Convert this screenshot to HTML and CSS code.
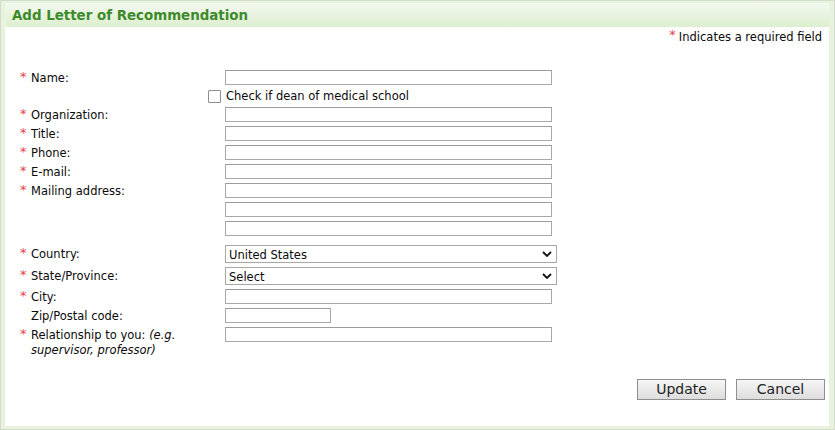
FILE: index.html
```html
<!DOCTYPE html>
<html>
<head>
<meta charset="utf-8">
<link rel="stylesheet" href="styles.css">
</head>
<body>
<div class="frame">
  <div class="header">Add Letter of Recommendation</div>
  <div class="content">
    <div class="required-note"><span class="req">*</span>Indicates a required field</div>
    <div class="form">
      <div class="row">
        <div class="label"><span class="req">*</span><span>Name:</span></div>
        <div class="field"><input type="text" class="text"></div>
      </div>
      <div class="row">
        <div class="label"></div>
        <div class="field check"><input type="checkbox" class="box"><span>Check if dean of medical school</span></div>
      </div>
      <div class="row">
        <div class="label"><span class="req">*</span><span>Organization:</span></div>
        <div class="field"><input type="text" class="text"></div>
      </div>
      <div class="row">
        <div class="label"><span class="req">*</span><span>Title:</span></div>
        <div class="field"><input type="text" class="text"></div>
      </div>
      <div class="row">
        <div class="label"><span class="req">*</span><span>Phone:</span></div>
        <div class="field"><input type="text" class="text"></div>
      </div>
      <div class="row">
        <div class="label"><span class="req">*</span><span>E-mail:</span></div>
        <div class="field"><input type="text" class="text"></div>
      </div>
      <div class="row">
        <div class="label"><span class="req">*</span><span>Mailing address:</span></div>
        <div class="field stack">
          <input type="text" class="text">
          <input type="text" class="text">
          <input type="text" class="text">
        </div>
      </div>
      <div class="row spaced">
        <div class="label sel"><span class="req">*</span><span>Country:</span></div>
        <div class="field">
          <div class="select-wrap">
            <select class="select"><option>United States</option></select>
            <svg class="chev" width="10" height="6" viewBox="0 0 10 6"><path d="M1 1 L5 5 L9 1" fill="none" stroke="#111" stroke-width="1.8"/></svg>
          </div>
        </div>
      </div>
      <div class="row">
        <div class="label sel"><span class="req">*</span><span>State/Province:</span></div>
        <div class="field">
          <div class="select-wrap">
            <select class="select"><option>Select</option></select>
            <svg class="chev" width="10" height="6" viewBox="0 0 10 6"><path d="M1 1 L5 5 L9 1" fill="none" stroke="#111" stroke-width="1.8"/></svg>
          </div>
        </div>
      </div>
      <div class="row">
        <div class="label"><span class="req">*</span><span>City:</span></div>
        <div class="field"><input type="text" class="text"></div>
      </div>
      <div class="row">
        <div class="label"><span class="req blank"></span><span>Zip/Postal code:</span></div>
        <div class="field"><input type="text" class="text short"></div>
      </div>
      <div class="row">
        <div class="label"><span class="req">*</span><div class="multi"><div>Relationship to you: <em>(e.g.</em></div><div><em>supervisor, professor)</em></div></div></div>
        <div class="field"><input type="text" class="text"></div>
      </div>
    </div>
    <div class="actions">
      <button class="btn">Update</button>
      <button class="btn">Cancel</button>
    </div>
  </div>
</div>
</body>
</html>
```

FILE: styles.css
```css
html, body {
  margin: 0;
  padding: 0;
  background: #ffffff;
}
body {
  font-family: "DejaVu Sans", Verdana, sans-serif;
  font-size: 11.5px;
  color: #0a0a0a;
}
.frame {
  box-sizing: border-box;
  width: 835px;
  height: 430px;
  border: 1px solid #d3dccd;
  background: #e8f3de;
  padding: 2px 5px 3px 4px;
  display: flex;
  flex-direction: column;
}
.header {
  height: 24px;
  box-sizing: border-box;
  line-height: 24px;
  padding: 1px 0 0 6px;
  font-weight: bold;
  font-size: 13.4px;
  color: #3d8a2c;
  background: linear-gradient(#f3f9ee, #ddeecf);
  border-left: 1px solid #eef6e6;
}
.content {
  flex: 1;
  background: #fff;
  display: flex;
  flex-direction: column;
}
.required-note {
  text-align: right;
  padding: 3px 7px 0 0;
  line-height: 15px;
}
.req {
  display: inline-block;
  color: #e8434a;
  font-size: 13px;
  line-height: 10px;
  vertical-align: top;
  margin-right: 3px;
}
.form {
  display: flex;
  flex-direction: column;
  gap: 4px;
  margin-top: 25px;
  padding-left: 15px;
}
.row {
  display: grid;
  grid-template-columns: 205px 1fr;
  align-items: start;
}
.row.spaced {
  margin-top: 5px;
}
.label {
  display: flex;
  align-items: flex-start;
  line-height: 15px;
  padding: 1px 6px 0 0;
  margin-bottom: -1px;
}
.label.sel {
  padding-top: 2px;
  margin-bottom: -2px;
}
.label .req {
  width: 11px;
  margin-right: 0;
  flex: none;
  line-height: 11px;
}
.label em {
  font-style: italic;
}
.field {
  display: flex;
}
.field.stack {
  flex-direction: column;
  gap: 4px;
}
.field.check {
  margin-left: -17px;
  align-items: center;
  height: 14px;
  gap: 5px;
  line-height: 14px;
}
.box {
  appearance: none;
  -webkit-appearance: none;
  width: 13px;
  height: 13px;
  margin: 0;
  border: 1px solid #8e8e8e;
  border-radius: 1px;
  background: #fff;
  box-sizing: border-box;
}
.text {
  box-sizing: border-box;
  width: 327px;
  height: 15px;
  margin: 0;
  padding: 0 2px;
  border: 1px solid #a8a8a8;
  border-top-color: #9c9c9c;
  background: #fff;
  font-family: "DejaVu Sans", Verdana, sans-serif;
  font-size: 11px;
}
.text.short {
  width: 106px;
}
.select-wrap {
  position: relative;
  width: 332px;
  height: 18px;
}
.select {
  appearance: none;
  -webkit-appearance: none;
  box-sizing: border-box;
  width: 332px;
  height: 18px;
  margin: 0;
  padding: 1px 0 0 3px;
  border: 1px solid #a8a8a8;
  border-radius: 0;
  background: #fff;
  color: #0a0a0a;
  font-family: "DejaVu Sans", Verdana, sans-serif;
  font-size: 11.5px;
}
.chev {
  position: absolute;
  right: 5px;
  top: 6px;
  pointer-events: none;
}
.actions {
  display: flex;
  justify-content: flex-end;
  gap: 10px;
  padding-right: 4px;
  margin-top: 22px;
}
.btn {
  box-sizing: border-box;
  width: 89px;
  height: 21px;
  margin: 0;
  padding: 0;
  border: 1px solid #8f8f8f;
  background: linear-gradient(#f6f6f6, #dddddd);
  font-family: "DejaVu Sans", Verdana, sans-serif;
  font-size: 14px;
  color: #222;
  line-height: 19px;
}
```
